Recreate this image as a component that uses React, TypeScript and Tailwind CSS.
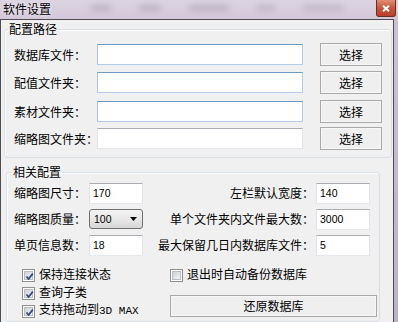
import React from "react";

const cjk = "font-['Noto_Sans_CJK_SC','Noto_Sans_CJK_JP',sans-serif]";

function PathInput({ active }: { active: boolean }) {
  return (
    <div
      className={
        "w-[206px] h-[21px] shrink-0 bg-white border " +
        (active
          ? "border-[#b4cde8] border-t-[#6f9ac8] border-l-[#a9c4e2]"
          : "border-[#e2e3ea] border-t-[#abadb3] border-b-[#e3e9ef]")
      }
    />
  );
}

function Btn({ children, className = "" }: { children: React.ReactNode; className?: string }) {
  return (
    <div
      className={
        "flex items-center justify-center shrink-0 border border-[#a9a9a9] bg-[#efefef] shadow-[inset_0_0_0_1px_#f6f6f6] text-[12px] leading-none " +
        className
      }
    >
      {children}
    </div>
  );
}

function NumInput({ value }: { value: string }) {
  return (
    <div className="w-[54px] h-[21px] shrink-0 bg-white border border-[#e2e3ea] border-t-[#abadb3] border-b-[#e3e9ef] flex items-center pl-[3px] font-['Liberation_Sans',sans-serif] text-[10.5px] leading-none">
      {value}
    </div>
  );
}

function Check({ checked }: { checked: boolean }) {
  return (
    <div className="w-[13px] h-[13px] border border-[#8e8f8f] bg-white p-[1px] shrink-0">
      <div className="w-full h-full bg-gradient-to-br from-[#cbcfd5] to-[#f6f6f6] border border-[#b9bcc0] relative">
        {checked && (
          <svg width="11" height="11" viewBox="0 0 11 11" className="absolute left-[-1px] top-[-1px]">
            <path d="M2.5 5.5 L4.6 8 L8.8 2.6" fill="none" stroke="#32488a" strokeWidth="1.8" strokeLinejoin="round" />
          </svg>
        )}
      </div>
    </div>
  );
}

function CheckRow({ checked, children }: { checked: boolean; children: React.ReactNode }) {
  return (
    <div className="h-[18px] flex items-center whitespace-nowrap">
      <Check checked={checked} />
      <span className="ml-[4px] leading-[14px] -mt-[3px]">{children}</span>
    </div>
  );
}

export default function App() {
  return (
    <div className={"w-[398px] h-[322px] overflow-hidden bg-[#d4cadb] flex flex-col text-[12px] text-black " + cjk}>
      {/* title bar */}
      <div className="h-[19px] flex items-start shrink-0 bg-gradient-to-b from-[#dcd4e2] to-[#d2c8d9]">
        <span className="pl-[3px] pt-[1px] leading-[16px] text-[12px] [text-shadow:0_0_4px_#ffffff]">软件设置</span>
        <div className="flex-1 flex items-center gap-[28px] pl-[40px] pt-[5px]">
          <span className="w-[20px] h-[6px] bg-[#a89fb0] blur-[3px] opacity-60" />
          <span className="w-[22px] h-[6px] bg-[#a89fb0] blur-[3px] opacity-60" />
          <span className="w-[40px] h-[6px] bg-[#a89fb0] blur-[3px] opacity-60" />
          <span className="w-[18px] h-[6px] bg-[#a89fb0] blur-[3px] opacity-50" />
          <span className="w-[40px] h-[6px] bg-[#a89fb0] blur-[3px] opacity-50" />
        </div>
        <div className="w-[20px] h-[17px] mr-[2px] rounded-b-[3px] border border-[#6b2c22] border-t-0 bg-gradient-to-b from-[#e08d74] via-[#c9543a] to-[#b8402a] flex items-center justify-center">
          <svg width="8" height="7" viewBox="0 0 8 7">
            <path d="M1 0.8 L7 6.2 M7 0.8 L1 6.2" stroke="#ffffff" strokeWidth="2" />
          </svg>
        </div>
      </div>

      {/* body */}
      <div className="flex-1 flex">
        <div className="w-[394px] bg-[#f0f0f0] border-l border-t border-r border-[#4d4d52] flex flex-col">
          {/* group 1 */}
          <fieldset className="ml-[3px] mt-[1px] w-[388px] border border-[#d5dfe5] rounded-[3px] shadow-[inset_1px_1px_0_#ffffff] pb-[7px]">
            <legend className="ml-[3px] px-[1px] leading-[16px]">配置路径</legend>
            {[
              { label: "数据库文件：", active: true, mt: "mt-[6px]" },
              { label: "配值文件夹：", active: true, mt: "mt-[5px]" },
              { label: "素材文件夹：", active: true, mt: "mt-[6px]" },
              { label: "缩略图文件夹：", active: false, mt: "mt-[4px]" },
            ].map((r) => (
              <div key={r.label} className={"h-[23px] flex items-center pl-[9px] " + r.mt}>
                <span className="w-[83px] shrink-0 whitespace-nowrap leading-[14px]">{r.label}</span>
                <PathInput active={r.active} />
                <Btn className="ml-[17px] w-[62px] h-[23px]">选择</Btn>
              </div>
            ))}
          </fieldset>

          {/* group 2 */}
          <fieldset className="ml-[5px] mt-[6px] w-[374px] flex-1 border border-[#d5dfe5] rounded-[3px] shadow-[inset_1px_1px_0_#ffffff]">
            <legend className="ml-[5px] px-[1px] leading-[16px]">相关配置</legend>
            <div className="pl-[7px] pr-[9px] pt-[2px] flex flex-col gap-[4px] whitespace-nowrap">
              <div className="h-[22px] flex items-center">
                <span className="w-[75px] shrink-0 leading-[14px]">缩略图尺寸：</span>
                <NumInput value="170" />
                <span className="flex-1 text-right pr-[2px] leading-[14px]">左栏默认宽度：</span>
                <NumInput value="140" />
              </div>
              <div className="h-[22px] flex items-center">
                <span className="w-[75px] shrink-0 leading-[14px]">缩略图质量：</span>
                <div className="w-[54px] h-[20px] shrink-0 rounded-[3px] border border-[#707070] bg-gradient-to-b from-[#f3f3f3] via-[#e8e8e8] to-[#d6d6d6] flex items-center pl-[4px] pr-[5px] font-['Liberation_Sans',sans-serif] text-[10.5px] leading-none">
                  <span className="flex-1">100</span>
                  <svg width="7" height="4" viewBox="0 0 7 4">
                    <path d="M0 0 H7 L3.5 4 Z" fill="#000" />
                  </svg>
                </div>
                <span className="flex-1 text-right pr-[2px] leading-[14px]">单个文件夹内文件最大数：</span>
                <NumInput value="3000" />
              </div>
              <div className="h-[22px] flex items-center">
                <span className="w-[75px] shrink-0 leading-[14px]">单页信息数：</span>
                <NumInput value="18" />
                <span className="flex-1 text-right pr-[2px] leading-[14px]">最大保留几日内数据库文件：</span>
                <NumInput value="5" />
              </div>
            </div>
            <div className="flex pl-[7px] mt-[10px]">
              <div className="w-[156px] pl-[8px] flex flex-col">
                <CheckRow checked>保持连接状态</CheckRow>
                <CheckRow checked>查询子类</CheckRow>
                <CheckRow checked>
                  支持拖动到<span className="font-['Liberation_Mono',monospace] text-[11px]">3D MAX</span>
                </CheckRow>
              </div>
              <div className="flex flex-col">
                <CheckRow checked={false}>退出时自动备份数据库</CheckRow>
                <Btn className="mt-[11px] w-[207px] h-[22px]">还原数据库</Btn>
              </div>
            </div>
          </fieldset>
        </div>
        <div className="flex-1 bg-gradient-to-b from-[#cdbfd6] to-[#bfb0c8]" />
      </div>
    </div>
  );
}
